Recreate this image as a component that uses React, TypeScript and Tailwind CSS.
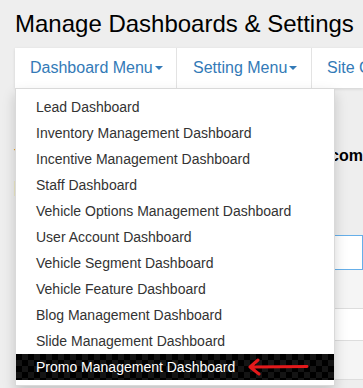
import { useState } from "react";

const items = [
  "Lead Dashboard",
  "Inventory Management Dashboard",
  "Incentive Management Dashboard",
  "Staff Dashboard",
  "Vehicle Options Management Dashboard",
  "User Account Dashboard",
  "Vehicle Segment Dashboard",
  "Vehicle Feature Dashboard",
  "Blog Management Dashboard",
  "Slide Management Dashboard",
  "Promo Management Dashboard",
];

const Caret = () => (
  <span className="ml-[2px] inline-block h-0 w-0 border-x-[4px] border-t-[4px] border-x-transparent border-t-current align-middle" />
);

const App = () => {
  const [active] = useState("Promo Management Dashboard");

  return (
    <div className="relative h-[388px] overflow-hidden bg-[#eeeeee] font-['Liberation_Sans',Arial,sans-serif] text-[#333]">
      <h1 className="ml-[15px] pt-[11px] text-[24px] leading-[26px] whitespace-nowrap text-black">
        Manage Dashboards &amp; Settings
      </h1>

      <div className="relative mt-[11px] ml-[15px]">
        <nav className="flex h-[40px] overflow-hidden bg-white shadow-[0_1px_3px_rgba(0,0,0,0.12)] text-[16px] text-[#337ab7] whitespace-nowrap">
          <div className="flex w-[161px] shrink-0 items-center pl-[15px]">
            Dashboard Menu
            <Caret />
          </div>
          <div className="flex w-[135px] shrink-0 items-center border-l border-[#e3e3e3] pl-[16px]">
            Setting Menu
            <Caret />
          </div>
          <div className="flex shrink-0 items-center border-l border-[#e3e3e3] pl-[15px]">
            Site Configuration
          </div>
        </nav>

        <ul className="absolute top-[40px] left-0 z-10 w-[320px] border border-[rgba(0,0,0,0.15)] bg-white py-[5px] text-[14px] leading-[20px] shadow-[0_6px_12px_rgba(0,0,0,0.175)]">
          {items.map((item) => (
            <li
              key={item}
              className={
                item === active
                  ? "relative bg-[repeating-conic-gradient(#141414_0_25%,#000_0_50%)] bg-[length:12px_12px] px-[20px] py-[3px] text-white"
                  : "px-[20px] py-[3px]"
              }
            >
              {item}
              {item === active && (
                <svg
                  className="absolute top-[4px] left-[231px]"
                  width="62"
                  height="18"
                  viewBox="0 0 62 18"
                  fill="none"
                >
                  <path
                    d="M60 8.5 L6 9 M11 2 L3 9 L12 16"
                    stroke="#e3191b"
                    strokeWidth="3"
                    strokeLinecap="round"
                    strokeLinejoin="round"
                  />
                </svg>
              )}
            </li>
          ))}
        </ul>
      </div>

      <div className="mt-[58px] pl-[14px] text-[16px] leading-[20px]">
        <div className="flex items-baseline whitespace-nowrap">
          <span className="text-[#e67e22]">T</span>
          <span className="w-[315px] text-right font-bold text-black">admin@promo</span>
          <span className="font-bold text-black">.com</span>
        </div>
        <p className="mt-[12px] font-bold text-[#e67e22]">|</p>
      </div>

      <div className="mt-[37px] ml-[15px]">
        <div className="h-[35px] border border-[#66afe9] bg-white" />
        <div className="h-[39px] border-b border-[#dddddd] bg-[#f5f5f5]" />
        <div className="h-[32px] border-b border-[#dddddd] bg-white" />
        <div className="h-[39px] border-b border-[#dddddd] bg-[#f5f5f5]" />
      </div>
    </div>
  );
};

export default App;
